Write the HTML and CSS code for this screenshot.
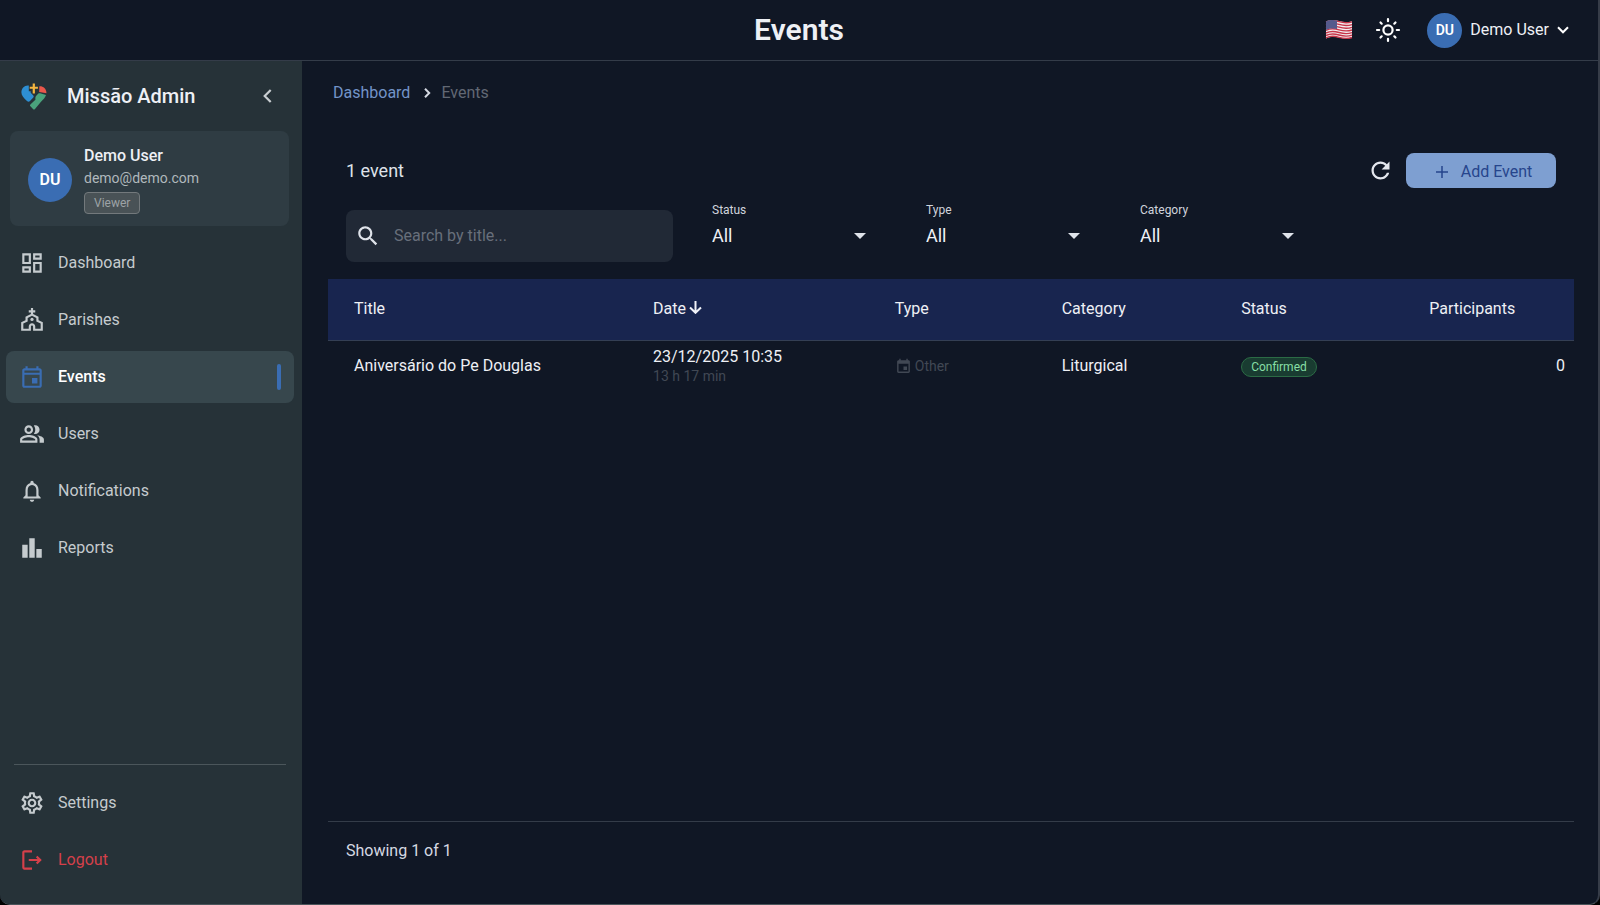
FILE: index.html
```html
<!DOCTYPE html>
<html lang="en">
<head>
  <meta charset="UTF-8">
  <title>Missão Admin - Events</title>
  <meta name="viewport" content="width=device-width, initial-scale=1.0">
  <link rel="stylesheet" href="styles.css">
</head>
<body>
<div class="app">

  <header class="topbar">
    <h1>Events</h1>
    <div class="topbar-actions">
      <button type="button" class="icon-btn" aria-label="Language">
        <svg class="flag" width="28" height="22" viewBox="0 0 28 22">
          <path fill="#f3eef0" d="M1 2.500C5 .5 9 .5 14 2s9 1.500 13 .2V18.500c-4 1.600-8 1.500-13 0s-9-1-13 1z"/>
          <g fill="none" stroke="#c8354a" stroke-width="1.400">
            <path d="M1 3.200C5 1.200 9 1.200 14 2.700s9 1.500 13 .2"/>
            <path d="M1 5.900C5 3.900 9 3.900 14 5.400s9 1.500 13 .2"/>
            <path d="M1 8.600C5 6.600 9 6.600 14 8.100s9 1.500 13 .2"/>
            <path d="M1 11.300C5 9.300 9 9.300 14 10.800s9 1.500 13 .2"/>
            <path d="M1 14C5 12 9 12 14 13.500s9 1.500 13 .2"/>
            <path d="M1 16.500C5 14.500 9 14.500 14 16s9 1.500 13 .2"/>
            <path d="M1 18.800C5 16.800 9 16.800 14 18.300s9 1.500 13 .2"/>
          </g>
          <path fill="#555a8c" d="M1 2.500C5 .6 8 .6 12 1.500v8.600C8 9.200 5 9.300 1 11z"/>
        </svg>
      </button>
      <button type="button" class="icon-btn" aria-label="Theme">
        <svg width="26" height="26" viewBox="0 0 26 26" fill="none" stroke="#fff" stroke-width="2.200">
          <circle cx="13" cy="13" r="4.600"/>
          <path stroke-linecap="round" d="M13 2v2.200M13 21.800V24M2 13h2.200M21.800 13H24M5.500 5.500l1.200 1.200M19.300 19.300l1.200 1.200M5.500 20.500l1.200-1.200M19.300 6.700l1.200-1.200"/>
        </svg>
      </button>
      <button type="button" class="account">
        <span class="avatar avatar-sm">DU</span>
        Demo User
        <svg width="12" height="8" viewBox="0 0 12 8" fill="none" stroke="#fff" stroke-width="2"><path d="M1 1.300l5 5 5-5"/></svg>
      </button>
    </div>
  </header>

  <div class="body">
    <aside class="sidebar">
      <div class="brand">
        <svg width="26" height="27" viewBox="0 0 26 27">
          <path fill="#2e8fd3" d="M7.800 2.600C3.600 2 .4 5.300.4 9.300c0 3 2 5.600 5.600 8.700 1 .9 2.200.8 3 0l3.300-3.500c.6-.7.500-1.400 0-2L9.700 9.800V8.300H7.800z"/>
          <path fill="#e9574b" d="M18.300 3.200c3.800-.3 7 2.300 7.200 7.100L18.200 9z"/>
          <path fill="#4aa37c" d="M14.800 13.300l2.600-2.700c.6-.5 1-.5 1.700-.3l5.900 1.700c-.8 2.400-2.500 4.400-5 6.700l-6 7.300c-.7.700-1.400.7-2 0l-2.600-2.700c-.6-.7-.6-1.200 0-1.800l4.700-4.400c.6-.6.600-1.200.1-1.800z"/>
          <path fill="#f5b63f" d="M11.700.5h2.200v3.200h3v2.100h-3v4.800h-2.200V5.800h-3V3.700h3z"/>
        </svg>
        <span class="brand-name">Missão Admin</span>
        <button type="button" class="icon-btn" aria-label="Collapse menu">
          <svg width="9" height="14" viewBox="0 0 9 14" fill="none" stroke="#c9ced1" stroke-width="2.200"><path d="M7.700 1 1.700 7l6 6"/></svg>
        </button>
      </div>

      <div class="user-card">
        <span class="avatar">DU</span>
        <div class="user-info">
          <div class="user-name">Demo User</div>
          <div class="user-mail">demo@demo.com</div>
          <span class="role">Viewer</span>
        </div>
      </div>

      <nav class="menu">
        <a href="#" class="menu-item">
          <svg width="26" height="26" viewBox="0 0 24 24"><path d="M19 5v2h-4V5h4M9 5v6H5V5h4m10 8v6h-4v-6h4M9 17v2H5v-2h4M21 3h-8v6h8V3zM11 3H3v10h8V3zm10 8h-8v10h8V11zm-10 4H3v6h8v-6z"/></svg>
          Dashboard
        </a>
        <a href="#" class="menu-item">
          <svg width="26" height="26" viewBox="0 0 24 24"><path d="M18 12.220V9l-5-2.500V5h2V3h-2V1h-2v2H9v2h2v1.500L6 9v3.220L2 14v8h9v-4c0-.55.45-1 1-1s1 .45 1 1v4h9v-8l-4-1.780zM20 20h-5v-2.040c0-1.690-1.350-3.060-3-3.060s-3 1.370-3 3.060V20H4v-4.790l4-1.810v-3.350L12 8l4 2.040v3.350l4 1.810V20z"/><circle cx="12" cy="11.500" r="1.500"/></svg>
          Parishes
        </a>
        <a href="#" class="menu-item active">
          <svg width="26" height="26" viewBox="0 0 24 24"><path d="M19 4h-1V2h-2v2H8V2H6v2H5c-1.110 0-2 .9-2 2v14c0 1.100.89 2 2 2h14c1.100 0 2-.9 2-2V6c0-1.100-.9-2-2-2zm0 16H5V10h14v10zm0-12H5V6h14v2zm-2 5h-5v5h5v-5z"/></svg>
          Events
        </a>
        <a href="#" class="menu-item">
          <svg width="26" height="26" viewBox="0 0 24 24"><path d="M16.670 13.130C18.040 14.060 19 15.320 19 17v3h4v-3c0-2.180-3.570-3.470-6.330-3.870z"/><path d="M15 12c2.210 0 4-1.790 4-4s-1.790-4-4-4c-.47 0-.91.1-1.330.24C14.500 5.270 15 6.580 15 8s-.5 2.730-1.330 3.760c.42.14.86.24 1.330.24zM9 12c2.210 0 4-1.790 4-4s-1.790-4-4-4-4 1.790-4 4 1.790 4 4 4zm0-6c1.100 0 2 .9 2 2s-.9 2-2 2-2-.9-2-2 .9-2 2-2zM9 13c-2.670 0-8 1.340-8 4v3h16v-3c0-2.660-5.330-4-8-4zm6 5H3v-.99C3.200 16.290 6.300 15 9 15s5.800 1.290 6 2v1z"/></svg>
          Users
        </a>
        <a href="#" class="menu-item">
          <svg width="26" height="26" viewBox="0 0 24 24"><path d="M12 22c1.100 0 2-.9 2-2h-4c0 1.100.9 2 2 2zm6-6v-5c0-3.070-1.630-5.640-4.500-6.320V4c0-.83-.67-1.500-1.500-1.500s-1.500.67-1.500 1.500v.68C7.640 5.360 6 7.920 6 11v5l-2 2v1h16v-1l-2-2zm-2 1H8v-6c0-2.480 1.510-4.500 4-4.500s4 2.020 4 4.500v6z"/></svg>
          Notifications
        </a>
        <a href="#" class="menu-item">
          <svg width="26" height="26" viewBox="0 0 24 24"><path d="M3 9h5v12H3zM9.500 3h5v18h-5zM16 13h5v8h-5z"/></svg>
          Reports
        </a>
      </nav>

      <div class="menu menu-bottom">
        <a href="#" class="menu-item">
          <svg width="26" height="26" viewBox="0 0 24 24"><path d="M19.430 12.980c.04-.32.07-.64.07-.98 0-.34-.03-.66-.07-.98l2.110-1.650c.19-.15.24-.42.12-.64l-2-3.460c-.09-.16-.26-.25-.44-.25-.06 0-.12.010-.17.030l-2.490 1c-.52-.4-1.080-.73-1.690-.98l-.38-2.650C14.460 2.180 14.250 2 14 2h-4c-.25 0-.46.18-.49.42l-.38 2.650c-.61.25-1.170.59-1.690.98l-2.490-1c-.06-.02-.12-.03-.18-.03-.17 0-.34.09-.43.25l-2 3.460c-.13.22-.07.49.12.64l2.110 1.650c-.04.32-.07.65-.07.98 0 .33.03.66.07.98l-2.110 1.650c-.19.15-.24.42-.12.64l2 3.460c.09.16.26.25.44.25.06 0 .12-.01.17-.03l2.490-1c.52.4 1.080.73 1.690.98l.38 2.650c.03.24.24.42.49.42h4c.25 0 .46-.18.49-.42l.38-2.650c.61-.25 1.170-.59 1.690-.98l2.490 1c.06.02.12.03.18.03.17 0 .34-.09.43-.25l2-3.460c.12-.22.07-.49-.12-.64l-2.110-1.650zm-1.980-1.710c.04.31.05.52.05.73 0 .21-.02.43-.05.73l-.14 1.130.89.7 1.080.84-.7 1.210-1.270-.51-1.040-.42-.9.68c-.43.32-.84.56-1.250.73l-1.060.43-.16 1.130-.2 1.350h-1.400l-.19-1.350-.16-1.130-1.060-.43c-.43-.18-.83-.41-1.230-.71l-.91-.7-1.060.43-1.270.51-.7-1.210 1.080-.84.89-.7-.14-1.130c-.03-.31-.05-.54-.05-.74s.02-.43.05-.73l.14-1.130-.89-.7-1.080-.84.7-1.210 1.270.51 1.040.42.9-.68c.43-.32.84-.56 1.250-.73l1.060-.43.16-1.130.2-1.350h1.390l.19 1.350.16 1.130 1.060.43c.43.18.83.41 1.230.71l.91.7 1.060-.43 1.270-.51.7 1.210-1.070.85-.89.7.14 1.130zM12 8c-2.210 0-4 1.790-4 4s1.790 4 4 4 4-1.790 4-4-1.790-4-4-4zm0 6c-1.100 0-2-.9-2-2s.9-2 2-2 2 .9 2 2-.9 2-2 2z"/></svg>
          Settings
        </a>
        <a href="#" class="menu-item logout">
          <svg width="26" height="26" viewBox="0 0 24 24"><path d="M5 5h7V3H5c-1.100 0-2 .9-2 2v14c0 1.100.9 2 2 2h7v-2H5V5zM17 8l-1.410 1.410L17.170 11H9v2h8.170l-1.580 1.580L17 16l4-4z"/></svg>
          Logout
        </a>
      </div>
    </aside>

    <main class="content">
      <nav class="breadcrumb">
        <a href="#">Dashboard</a>
        <svg width="7" height="10" viewBox="0 0 7 10" fill="none" stroke="#d5d9e2" stroke-width="2"><path d="M1 .8 5.200 5 1 9.200"/></svg>
        <span>Events</span>
      </nav>

      <div class="toolbar">
        <span class="count">1 event</span>
        <button type="button" class="icon-btn" aria-label="Refresh">
          <svg width="27" height="27" viewBox="0 0 24 24" fill="#e4e7ee"><path d="M17.650 6.350C16.200 4.900 14.210 4 12 4c-4.420 0-7.990 3.580-7.990 8s3.570 8 7.990 8c3.730 0 6.840-2.550 7.730-6h-2.080c-.82 2.330-3.040 4-5.650 4-3.310 0-6-2.690-6-6s2.690-6 6-6c1.660 0 3.140.69 4.220 1.780L13 11h7V4l-2.350 2.350z"/></svg>
        </button>
        <button type="button" class="add-btn">
          <svg width="12" height="12" viewBox="0 0 12 12" stroke="#26458c" stroke-width="1.500"><path d="M6 0v12M0 6h12"/></svg>
          Add Event
        </button>
      </div>

      <form class="filters">
        <label class="search">
          <svg width="26" height="26" viewBox="0 0 24 24" fill="#dfe3ea"><path d="M15.500 14h-.79l-.28-.27C15.410 12.590 16 11.110 16 9.500 16 5.910 13.090 3 9.500 3S3 5.910 3 9.500 5.910 16 9.500 16c1.610 0 3.090-.59 4.230-1.570l.27.28v.79l5 4.990L20.490 19l-4.990-5zm-6 0C7.010 14 5 11.990 5 9.500S7.010 5 9.500 5 14 7.010 14 9.500 11.990 14 9.500 14z"/></svg>
          <input type="text" placeholder="Search by title..." aria-label="Search by title">
        </label>
        <div class="field">
          <label for="status">Status</label>
          <div class="select">
            <select id="status"><option>All</option></select>
            <svg width="12" height="6" viewBox="0 0 12 6"><path d="M0 0h12L6 6z"/></svg>
          </div>
        </div>
        <div class="field">
          <label for="type">Type</label>
          <div class="select">
            <select id="type"><option>All</option></select>
            <svg width="12" height="6" viewBox="0 0 12 6"><path d="M0 0h12L6 6z"/></svg>
          </div>
        </div>
        <div class="field">
          <label for="category">Category</label>
          <div class="select">
            <select id="category"><option>All</option></select>
            <svg width="12" height="6" viewBox="0 0 12 6"><path d="M0 0h12L6 6z"/></svg>
          </div>
        </div>
      </form>

      <div class="table-wrap">
        <table>
          <thead>
            <tr>
              <th class="col-title">Title</th>
              <th class="col-date">Date<svg width="13" height="13" viewBox="0 0 13 13" fill="none" stroke="#f0f2f8" stroke-width="2"><path d="M6.500 0v11.500M1 6.500l5.500 5.300L12 6.500"/></svg></th>
              <th class="col-type">Type</th>
              <th class="col-category">Category</th>
              <th class="col-status">Status</th>
              <th>Participants</th>
            </tr>
          </thead>
          <tbody>
            <tr>
              <td>Aniversário do Pe Douglas</td>
              <td>
                <div class="date">23/12/2025 10:35</div>
                <div class="duration">13 h 17 min</div>
              </td>
              <td>
                <div class="type">
                  <svg width="17" height="17" viewBox="0 0 24 24"><path d="M19 3h-1V1h-2v2H8V1H6v2H5c-1.110 0-2 .9-2 2v14c0 1.100.89 2 2 2h14c1.100 0 2-.9 2-2V5c0-1.100-.9-2-2-2zm0 16H5V8h14v11zm-2-7h-5v5h5v-5z"/></svg>
                  Other
                </div>
              </td>
              <td>Liturgical</td>
              <td><span class="chip">Confirmed</span></td>
              <td class="number">0</td>
            </tr>
          </tbody>
        </table>
      </div>

      <footer class="table-footer">Showing 1 of 1</footer>
    </main>
  </div>

</div>
</body>
</html>
```
FILE: styles.css
```css
* {
  box-sizing: border-box;
}

body {
  margin: 0;
  background-color: #000;
  color: #eef0f5;
  font-family: Roboto, "Liberation Sans", sans-serif;
  font-size: 16px;
  line-height: 20px;
}

a {
  color: inherit;
  text-decoration: none;
}

button,
input,
select {
  padding: 0;
  border: 0;
  background: none;
  color: inherit;
  font: inherit;
}

button {
  cursor: pointer;
}

svg {
  display: block;
  flex: none;
}

.app {
  display: flex;
  flex-direction: column;
  min-height: 100vh;
  background-color: #101725;
  border-right: 2px solid #363c48;
  border-bottom: 1px solid #4a545a;
  border-radius: 0 0 10px 10px;
  overflow: hidden;
}

/* top bar */
.topbar {
  display: grid;
  grid-template-columns: 1fr auto 1fr;
  align-items: center;
  height: 61px;
  padding: 0 29px;
  border-bottom: 1px solid #343c49;
}

h1 {
  grid-column: 2;
  margin: 0;
  font-size: 30px;
  line-height: 36px;
  font-weight: 600;
}

.topbar-actions {
  display: flex;
  justify-content: flex-end;
  align-items: center;
  gap: 22px;
}

.account {
  display: flex;
  align-items: center;
  gap: 8px;
  margin-left: 4px;
}

.avatar {
  display: flex;
  align-items: center;
  justify-content: center;
  width: 44px;
  height: 44px;
  border-radius: 50%;
  background-color: #3a6db3;
  color: #fff;
  font-weight: 600;
}

.avatar-sm {
  width: 35px;
  height: 35px;
  font-size: 14px;
}

.body {
  display: flex;
  flex: 1;
}

/* sidebar */
.sidebar {
  display: flex;
  flex-direction: column;
  width: 302px;
  background-color: #263238;
}

.brand {
  display: flex;
  align-items: center;
  height: 70px;
  padding: 0 30px 0 21px;
}

.brand-name {
  flex: 1;
  margin-left: 20px;
  font-size: 20px;
  font-weight: 500;
}

.user-card {
  display: flex;
  align-items: center;
  gap: 12px;
  height: 95px;
  margin: 0 13px 11px 10px;
  padding: 2px 17px 0 18px;
  border-radius: 8px;
  background-color: #2f3c43;
}

.user-name {
  font-weight: 500;
}

.user-mail {
  margin: 2px 0 4px;
  color: #b0b8bc;
  font-size: 14px;
}

.role {
  display: inline-block;
  padding: 0 9px;
  border: 1px solid #73797c;
  border-radius: 4px;
  background-color: #495256;
  color: #9da3a6;
  font-size: 12px;
}

.menu {
  display: flex;
  flex-direction: column;
  gap: 5px;
  padding: 0 8px 0 6px;
}

.menu-item {
  display: flex;
  align-items: center;
  gap: 13px;
  height: 52px;
  padding: 0 13px;
  border-radius: 8px;
  color: #c5cbce;
}

.menu-item svg {
  fill: currentColor;
}

.menu-item.active {
  background-color: #37474d;
  color: #fff;
  font-weight: 500;
}

.menu-item.active svg {
  fill: #3a6db3;
}

.menu-item.active::after {
  content: "";
  width: 4px;
  height: 26px;
  margin-left: auto;
  border-radius: 2px;
  background-color: #3a6db3;
}

.menu-item.logout {
  color: #d5404a;
}

.menu-bottom {
  margin-top: auto;
  padding-bottom: 18px;
}

.menu-bottom::before {
  content: "";
  height: 1px;
  margin: 0 8px 7px;
  background-color: #4b565b;
}

/* main content */
.content {
  display: flex;
  flex-direction: column;
  flex: 1;
  padding: 22px 24px 24px 26px;
}

.breadcrumb {
  display: flex;
  align-items: center;
  gap: 10px;
  margin-bottom: 50px;
  padding-left: 5px;
  color: #626874;
}

.breadcrumb a {
  margin-right: 4px;
  color: #7394c8;
}

.toolbar {
  display: flex;
  align-items: center;
  gap: 12px;
  padding: 0 18px;
}

.count {
  margin-right: auto;
  color: #dfe2e9;
  font-size: 18px;
}

.add-btn {
  display: flex;
  align-items: center;
  justify-content: center;
  gap: 13px;
  width: 150px;
  height: 35px;
  padding: 2px 0 0 6px;
  border-radius: 8px;
  background-color: #7e9fd1;
  color: #26458c;
}

.filters {
  display: flex;
  gap: 54px;
  margin-top: 22px;
  padding: 0 18px;
}

.search {
  display: flex;
  align-items: center;
  gap: 13px;
  width: 327px;
  height: 52px;
  margin-right: -15px;
  padding: 0 9px;
  border-radius: 8px;
  background-color: #212936;
}

.search input {
  flex: 1;
  min-width: 0;
  outline: none;
}

.search input::placeholder {
  color: #686f7b;
}

.field {
  width: 160px;
}

.field label {
  display: block;
  margin-top: -10px;
  color: #d0d4dd;
  font-size: 12px;
}

.select {
  display: flex;
  align-items: center;
  margin-top: 4px;
}

.select select {
  flex: 1;
  margin-right: -18px;
  padding-right: 18px;
  appearance: none;
  font-size: 18px;
  line-height: 24px;
}

.select svg {
  margin-right: 6px;
  fill: #dfe3ea;
  pointer-events: none;
}

/* table */
.table-wrap {
  flex: 1;
  margin-top: 17px;
  border-bottom: 1px solid #343c49;
}

table {
  width: 100%;
  border-collapse: collapse;
  table-layout: fixed;
}

th,
td {
  height: 52px;
  padding: 0 0 0 26px;
  text-align: left;
  white-space: nowrap;
}

th {
  height: 61px;
  border-bottom: 1px solid #343f54;
  background-color: #18254f;
  font-weight: 400;
}

th svg {
  display: inline-block;
  margin-left: 3px;
}

.col-title {
  width: 24%;
}

.col-date {
  width: 19.4%;
}

.col-type {
  width: 13.4%;
}

.col-category {
  width: 14.4%;
}

.col-status {
  width: 15.1%;
}

.duration {
  color: #414854;
  font-size: 14px;
  line-height: 18px;
}

.type {
  display: flex;
  align-items: center;
  gap: 3px;
  color: #414854;
  font-size: 14px;
}

.type svg {
  fill: currentColor;
}

.chip {
  display: inline-block;
  padding: 0 9px;
  border: 1px solid #2b6b45;
  border-radius: 10px;
  background-color: #193c31;
  color: #86dfa5;
  font-size: 12px;
  line-height: 18px;
  vertical-align: middle;
}

td.number {
  padding-right: 9px;
  text-align: right;
}

.table-footer {
  padding: 19px 18px;
  color: #d5d9e2;
}
```
